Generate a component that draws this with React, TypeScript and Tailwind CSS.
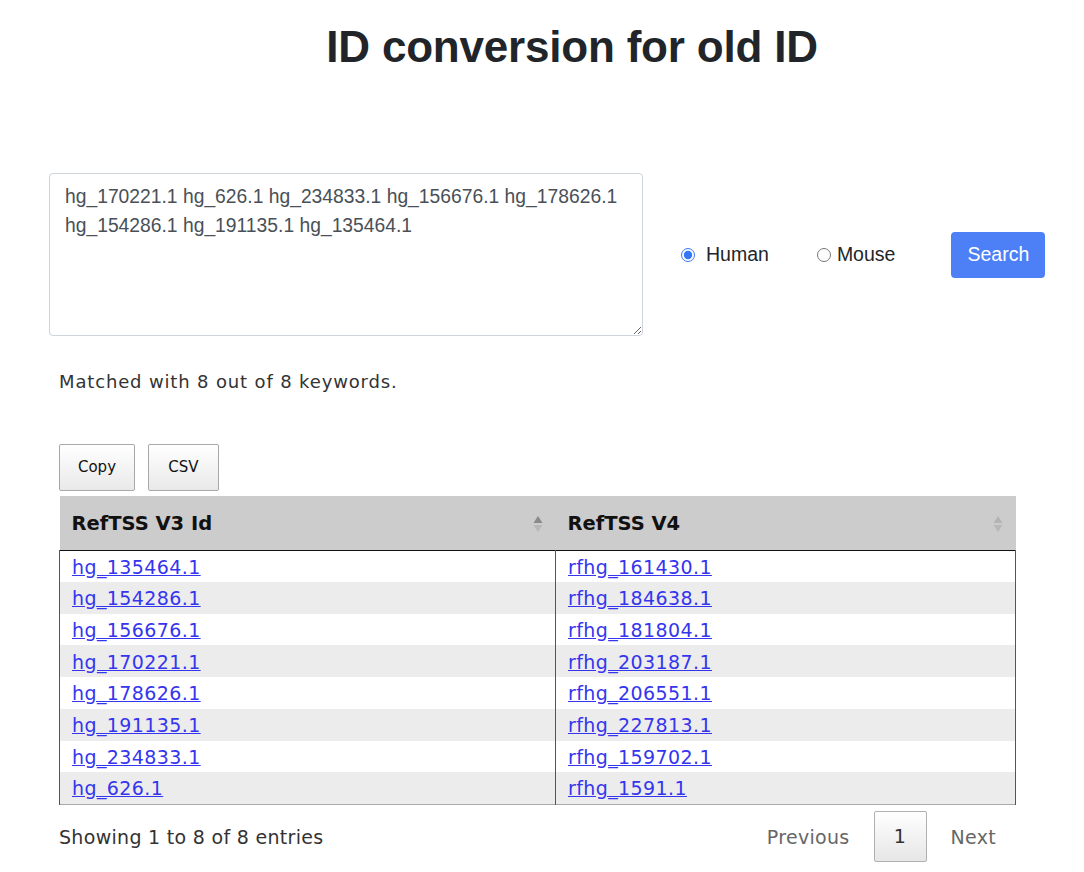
import React, { useState } from "react";

const rows: [string, string][] = [
  ["hg_135464.1", "rfhg_161430.1"],
  ["hg_154286.1", "rfhg_184638.1"],
  ["hg_156676.1", "rfhg_181804.1"],
  ["hg_170221.1", "rfhg_203187.1"],
  ["hg_178626.1", "rfhg_206551.1"],
  ["hg_191135.1", "rfhg_227813.1"],
  ["hg_234833.1", "rfhg_159702.1"],
  ["hg_626.1", "rfhg_1591.1"],
];

const SortIcon = ({ active }: { active: boolean }) => (
  <svg width="12" height="22" viewBox="0 0 12 22" className="shrink-0">
    <path d="M6 3 L10.5 10 L1.5 10 Z" fill={active ? "#8a8a8a" : "#b4b4b4"} />
    <path d="M6 19 L10.5 12 L1.5 12 Z" fill="#b8b8b8" />
  </svg>
);

const App: React.FC = () => {
  const [species, setSpecies] = useState<"human" | "mouse">("human");
  const [text, setText] = useState(
    "hg_170221.1 hg_626.1 hg_234833.1 hg_156676.1 hg_178626.1 hg_154286.1 hg_191135.1 hg_135464.1"
  );

  return (
    <div className="w-[1084px] min-h-[872px] bg-white text-[#212529]" style={{ fontFamily: '"Liberation Sans", Arial, sans-serif' }}>
      <h1 className="pt-[19px] pl-[60px] text-center text-[44px] leading-[55px] font-bold text-[#212529] tracking-[-0.2px]">
        ID conversion for old ID
      </h1>

      {/* search form */}
      <div className="mt-[99px] ml-[49px] flex items-center">
        <textarea
          value={text}
          onChange={(e) => setText(e.target.value)}
          className="w-[594px] h-[163px] border border-[#ced4da] rounded-[4px] px-[15px] py-[8px] text-[19.3px] leading-[29px] text-[#495057] resize-y outline-none"
        />
        <label className="ml-[38px] flex items-center text-[19.5px] text-[#212529]">
          <input
            type="radio"
            name="species"
            checked={species === "human"}
            onChange={() => setSpecies("human")}
            className="w-[14px] h-[14px] m-0 accent-[#3478f6]"
          />
          <span className="ml-[11px]">Human</span>
        </label>
        <label className="ml-[48px] flex items-center text-[19.5px] text-[#212529]">
          <input
            type="radio"
            name="species"
            checked={species === "mouse"}
            onChange={() => setSpecies("mouse")}
            className="w-[14px] h-[14px] m-0 accent-[#3478f6]"
          />
          <span className="ml-[6px]">Mouse</span>
        </label>
        <button className="ml-[56px] w-[94px] h-[46px] rounded-[4px] bg-[#4d80f7] text-white text-[19.5px]">
          Search
        </button>
      </div>

      <div className="ml-[59px] w-[957px]" style={{ fontFamily: '"DejaVu Sans", "Liberation Sans", sans-serif' }}>
        <p className="mt-[34px] text-[18px] leading-[24px] tracking-[0.85px] text-[#333]">Matched with 8 out of 8 keywords.</p>

        <div className="mt-[50px] flex gap-[13px]">
          <button className="w-[76px] h-[47px] border border-[#a8a8a8] rounded-[2px] bg-gradient-to-b from-white to-[#e9e9e9] text-[15px] text-[#111]">
            Copy
          </button>
          <button className="w-[71px] h-[47px] border border-[#a8a8a8] rounded-[2px] bg-gradient-to-b from-white to-[#e9e9e9] text-[15px] text-[#111]">
            CSV
          </button>
        </div>

        <table className="mt-[5px] w-[957px] border-collapse text-[19px] tracking-[0.4px]">
          <thead>
            <tr className="bg-[#cccccc] h-[54px] border-b border-[#111]">
              <th className="w-[496px] pl-[12px] pr-[12px] pt-[2px] text-left font-bold text-[19.5px] tracking-normal text-[#111]">
                <div className="flex items-center justify-between">
                  <span>RefTSS V3 Id</span>
                  <SortIcon active />
                </div>
              </th>
              <th className="pl-[12px] pr-[12px] pt-[2px] text-left font-bold text-[19.5px] tracking-normal text-[#111]">
                <div className="flex items-center justify-between">
                  <span>RefTSS V4</span>
                  <SortIcon active={false} />
                </div>
              </th>
            </tr>
          </thead>
          <tbody>
            {rows.map(([a, b], i) => (
              <tr key={a} className={i % 2 === 0 ? "bg-white h-[31.75px]" : "bg-[#ececec] h-[31.75px]"}>
                <td className="pl-[12px] pt-[1px] pb-0 border-l border-[#555] leading-[30px]">
                  <a href="#" className="text-[#3535ee] underline">{a}</a>
                </td>
                <td className="pl-[12px] pt-[1px] pb-0 border-l border-r border-[#555] leading-[30px]">
                  <a href="#" className="text-[#3535ee] underline">{b}</a>
                </td>
              </tr>
            ))}
            <tr className="h-0 border-t border-[#aaa]"><td colSpan={2} className="p-0" /></tr>
          </tbody>
        </table>

        <div className="mt-[6px] flex items-center justify-between">
          <span className="pt-[2px] text-[19px] tracking-[0.3px] text-[#333]">Showing 1 to 8 of 8 entries</span>
          <div className="flex items-center text-[19px] tracking-[0.3px] mr-[20px]">
            <span className="pt-[2px] text-[#666] mr-[24px]">Previous</span>
            <span className="w-[53px] h-[51px] flex items-center justify-center border border-[#b0b0b0] rounded-[2px] bg-gradient-to-b from-white to-[#e6e6e6] text-[#333]">1</span>
            <span className="pt-[2px] text-[#666] ml-[24px]">Next</span>
          </div>
        </div>
      </div>
    </div>
  );
};

export default App;
